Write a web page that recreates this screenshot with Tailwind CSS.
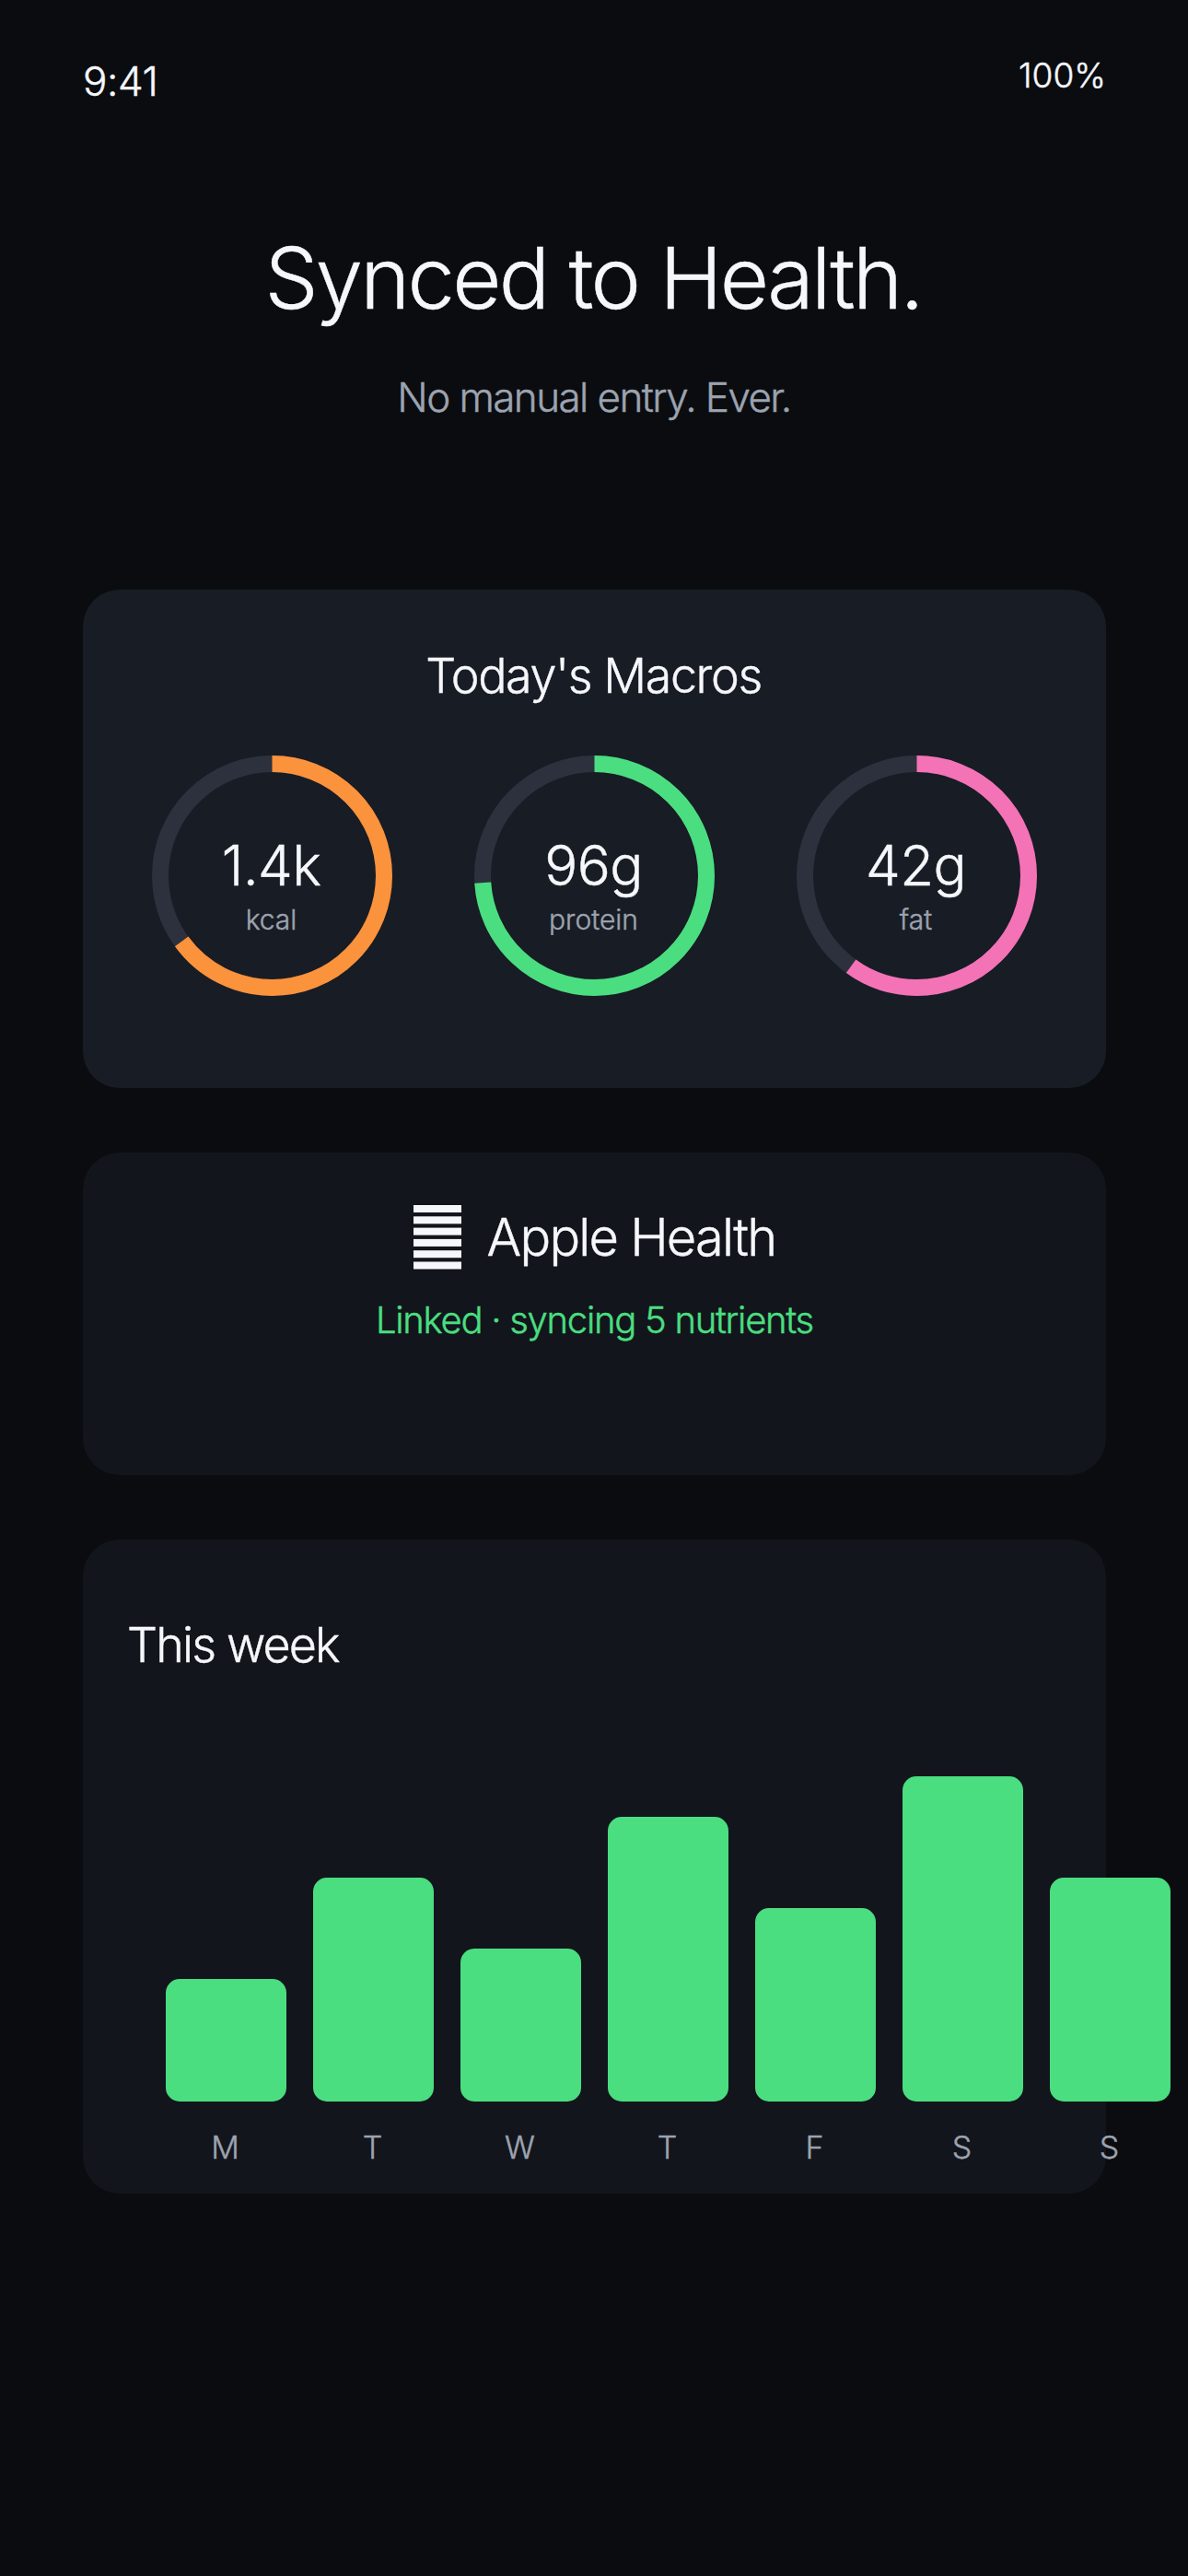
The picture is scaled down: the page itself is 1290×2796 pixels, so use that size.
<!DOCTYPE html>
<html lang="en">

<head>
    <meta charset="UTF-8">
    <title>Synced to Health</title>
    <script src="https://cdn.jsdelivr.net/npm/@tailwindcss/browser@4"></script>
</head>

<body class="w-[1290px] h-[2796px] overflow-hidden bg-[#0a0c10] text-[#f5f7fa] font-['Inter',sans-serif] font-light [-webkit-text-stroke:0.45px]">
    <!-- status bar -->
    <div class="flex justify-between items-start pl-[90px] pr-[89px] pt-[60px] h-[120px]">
        <span class="text-[44px] leading-[56px] tracking-[-0.01em]">9:41</span>
        <span class="text-[37px] leading-[44px]">100%</span>
    </div>

    <!-- heading -->
    <div class="mt-[120px] text-center">
        <h1 class="text-[92px] leading-[124px] tracking-[-0.03em] pr-[2px]">Synced to Health.</h1>
        <p class="mt-[37px] text-[44px] leading-[60px] tracking-[-0.036em] text-[#9ca3af]">No manual entry. Ever.</p>
    </div>

    <div class="ml-[90px] w-[1111px] mt-[179px] flex flex-col gap-[70px]">
        <!-- macros -->
        <div class="h-[541px] rounded-[40px] bg-[#181c24] pt-[64px]">
            <h2 class="text-center text-[52px] leading-[60px] tracking-[-0.027em] pr-[2px]">Today's Macros</h2>
            <div class="mt-[56px] flex justify-center gap-[89px]">
                <div class="relative w-[261px] h-[261px]">
                    <svg class="w-full h-full -rotate-90" viewBox="0 0 261 261" fill="none" stroke-width="18">
                        <circle cx="130.5" cy="130.5" r="121.5" stroke="#2d313e" />
                        <circle cx="130.5" cy="130.5" r="121.5" stroke="#fb923c" pathLength="100" stroke-dasharray="65 100" />
                    </svg>
                    <div class="absolute inset-0 flex flex-col items-center justify-center pt-[22px] pr-[2px]">
                        <span class="text-[60px] leading-[68px] tracking-[-0.01em]">1.4k</span>
                        <span class="mt-[4px] text-[30px] leading-[42px] text-[#9ca3af]">kcal</span>
                    </div>
                </div>
                <div class="relative w-[261px] h-[261px]">
                    <svg class="w-full h-full -rotate-90" viewBox="0 0 261 261" fill="none" stroke-width="18">
                        <circle cx="130.5" cy="130.5" r="121.5" stroke="#2d313e" />
                        <circle cx="130.5" cy="130.5" r="121.5" stroke="#4ade80" pathLength="100" stroke-dasharray="74 100" />
                    </svg>
                    <div class="absolute inset-0 flex flex-col items-center justify-center pt-[22px] pr-[2px]">
                        <span class="text-[60px] leading-[68px] tracking-[-0.01em]">96g</span>
                        <span class="mt-[4px] text-[30px] leading-[42px] text-[#9ca3af]">protein</span>
                    </div>
                </div>
                <div class="relative w-[261px] h-[261px]">
                    <svg class="w-full h-full -rotate-90" viewBox="0 0 261 261" fill="none" stroke-width="18">
                        <circle cx="130.5" cy="130.5" r="121.5" stroke="#2d313e" />
                        <circle cx="130.5" cy="130.5" r="121.5" stroke="#f472b6" pathLength="100" stroke-dasharray="60 100" />
                    </svg>
                    <div class="absolute inset-0 flex flex-col items-center justify-center pt-[22px] pr-[2px]">
                        <span class="text-[60px] leading-[68px] tracking-[-0.01em]">42g</span>
                        <span class="mt-[4px] text-[30px] leading-[42px] text-[#9ca3af]">fat</span>
                    </div>
                </div>
            </div>
        </div>

        <!-- apple health -->
        <div class="h-[350px] rounded-[40px] bg-[#12151c] pt-[56px] text-center">
            <div class="flex justify-center items-center gap-[28px]">
                <svg class="w-[52px] h-[70px]" viewBox="0 0 52 70" fill="#f5f7fa">
                    <rect y="0" width="52" height="8" />
                    <rect y="12.3" width="52" height="8" />
                    <rect y="24.6" width="52" height="8" />
                    <rect y="36.9" width="52" height="8" />
                    <rect y="49.2" width="52" height="8" />
                    <rect y="61.5" width="52" height="8" />
                </svg>
                <span class="text-[56px] leading-[72px] tracking-[-0.032em]">Apple Health</span>
            </div>
            <p class="mt-[28px] text-[40px] leading-[52px] tracking-[-0.032em] text-[#4ade80]">Linked · syncing 5 nutrients</p>
        </div>

        <!-- week chart -->
        <div class="h-[710px] rounded-[40px] bg-[#12151c] pt-[83px] pl-[50px]">
            <h2 class="ml-[-2px] text-[52px] leading-[64px] tracking-[-0.036em]">This week</h2>
            <div class="mt-[110px] pl-[40px] flex items-end gap-[29px] h-[353px]">
                <div class="w-[131px] shrink-0 h-[133px] rounded-[15px] bg-[#4ade80]"></div>
                <div class="w-[131px] shrink-0 h-[243px] rounded-[15px] bg-[#4ade80]"></div>
                <div class="w-[131px] shrink-0 h-[166px] rounded-[15px] bg-[#4ade80]"></div>
                <div class="w-[131px] shrink-0 h-[309px] rounded-[15px] bg-[#4ade80]"></div>
                <div class="w-[131px] shrink-0 h-[210px] rounded-[15px] bg-[#4ade80]"></div>
                <div class="w-[131px] shrink-0 h-[353px] rounded-[15px] bg-[#4ade80]"></div>
                <div class="w-[131px] shrink-0 h-[243px] rounded-[15px] bg-[#4ade80]"></div>
            </div>
            <div class="mt-[28px] pl-[39px] flex gap-[29px] text-center text-[34px] leading-[44px] text-[#9ca3af]">
                <span class="w-[131px] shrink-0">M</span>
                <span class="w-[131px] shrink-0">T</span>
                <span class="w-[131px] shrink-0">W</span>
                <span class="w-[131px] shrink-0">T</span>
                <span class="w-[131px] shrink-0">F</span>
                <span class="w-[131px] shrink-0">S</span>
                <span class="w-[131px] shrink-0">S</span>
            </div>
        </div>
    </div>
</body>

</html>
